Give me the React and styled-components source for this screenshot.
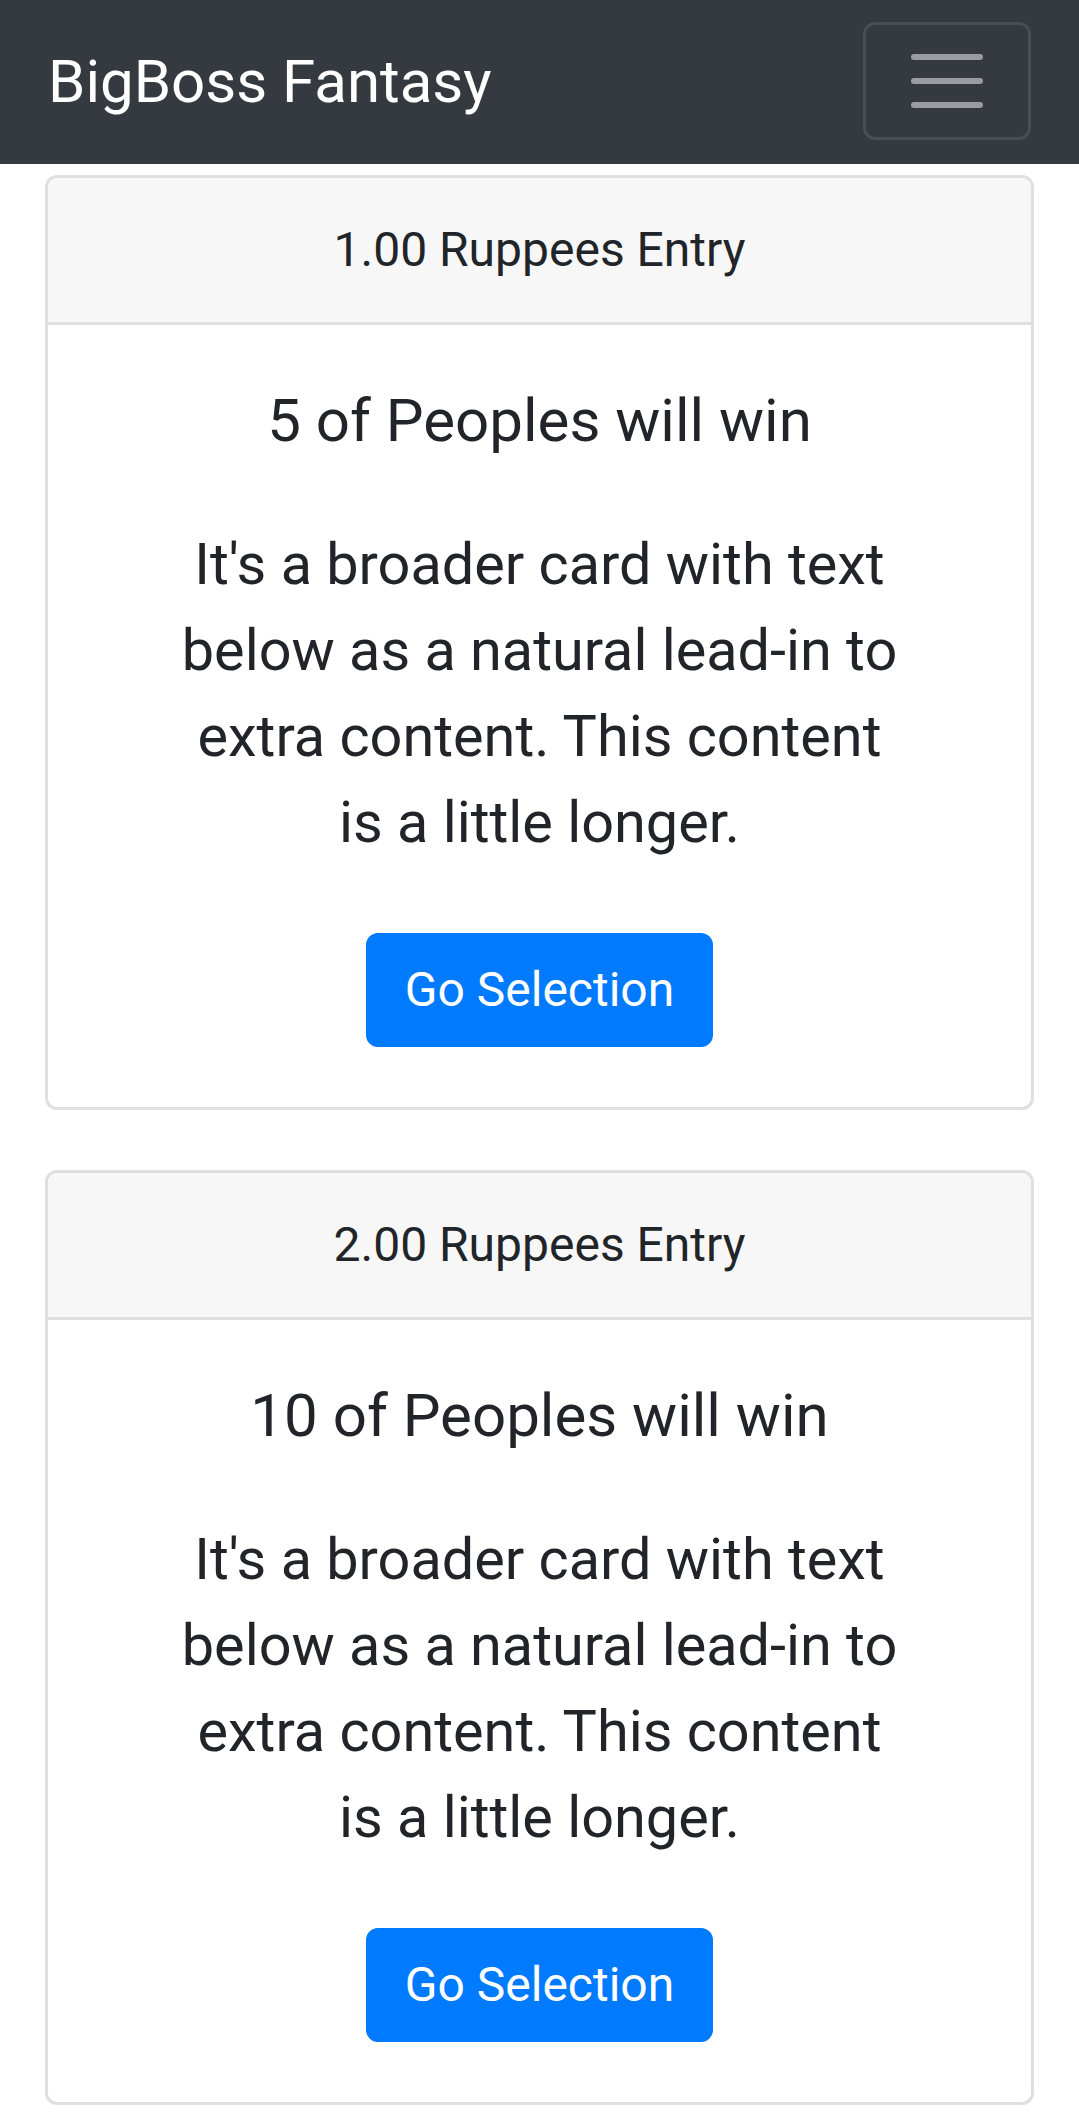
import styled, { createGlobalStyle } from 'styled-components';

const GlobalStyle = createGlobalStyle`
  body {
    margin: 0;
    background-color: #fff;
    color: #212529;
    font-family: Roboto, 'Noto Sans', 'Liberation Sans', sans-serif;
  }
`;

const Navbar = styled.nav`
  display: flex;
  align-items: center;
  justify-content: space-between;
  height: 164px;
  padding: 0 48px;
  box-sizing: border-box;
  background-color: #343a40;
`;

const Brand = styled.a`
  color: #fff;
  font-size: 60px;
  line-height: 90px;
  padding: 15px 0;
  text-decoration: none;
`;

const Toggler = styled.button`
  display: flex;
  align-items: center;
  justify-content: center;
  width: 168px;
  height: 118px;
  padding: 0;
  margin-top: -2px;
  background: transparent;
  border: 3px solid rgba(255, 255, 255, 0.1);
  border-radius: 12px;
`;

const Container = styled.main`
  padding: 11px 45px 0 45px;
`;

const Card = styled.section`
  border: 3px solid #dfdfdf;
  border-radius: 12px;
  overflow: hidden;
  margin-bottom: 60px;
  background-color: #fff;
`;

const CardHeader = styled.header`
  padding: 36px 60px;
  background-color: #f7f7f7;
  border-bottom: 3px solid #dfdfdf;
  font-size: 48px;
  line-height: 72px;
  text-align: center;
`;

const CardBody = styled.div`
  display: flex;
  flex-direction: column;
  align-items: center;
  padding: 60px;
  text-align: center;
`;

const CardTitle = styled.h5`
  margin: 0 0 65px 0;
  font-size: 60px;
  font-weight: 400;
  line-height: 72px;
`;

const CardText = styled.p`
  max-width: 722px;
  margin: 0 0 67px 0;
  font-size: 57.6px;
  line-height: 86px;
`;

const Button = styled.button`
  padding: 18px 36px;
  font-family: inherit;
  font-size: 48px;
  line-height: 72px;
  color: #fff;
  background-color: #007bff;
  border: 3px solid #007bff;
  border-radius: 12px;
`;

const contests = [
  { entry: '1.00', winners: 5 },
  { entry: '2.00', winners: 10 },
];

const MenuIcon = () => (
  <svg width='90' height='90' viewBox='0 0 30 30'>
    <path
      d='M4 7h22M4 15h22M4 23h22'
      stroke='rgba(255,255,255,0.5)'
      strokeWidth='2'
      strokeLinecap='round'
    />
  </svg>
);

const App = () => {
  return (
    <>
      <GlobalStyle />
      <Navbar>
        <Brand href='#'>BigBoss Fantasy</Brand>
        <Toggler aria-label='Toggle navigation'>
          <MenuIcon />
        </Toggler>
      </Navbar>
      <Container>
        {contests.map((contest) => (
          <Card key={contest.entry}>
            <CardHeader>{contest.entry} Ruppees Entry</CardHeader>
            <CardBody>
              <CardTitle>{contest.winners} of Peoples will win</CardTitle>
              <CardText>
                It's a broader card with text below as a natural lead-in to
                extra content. This content is a little longer.
              </CardText>
              <Button>Go Selection</Button>
            </CardBody>
          </Card>
        ))}
      </Container>
    </>
  );
};

export default App;
